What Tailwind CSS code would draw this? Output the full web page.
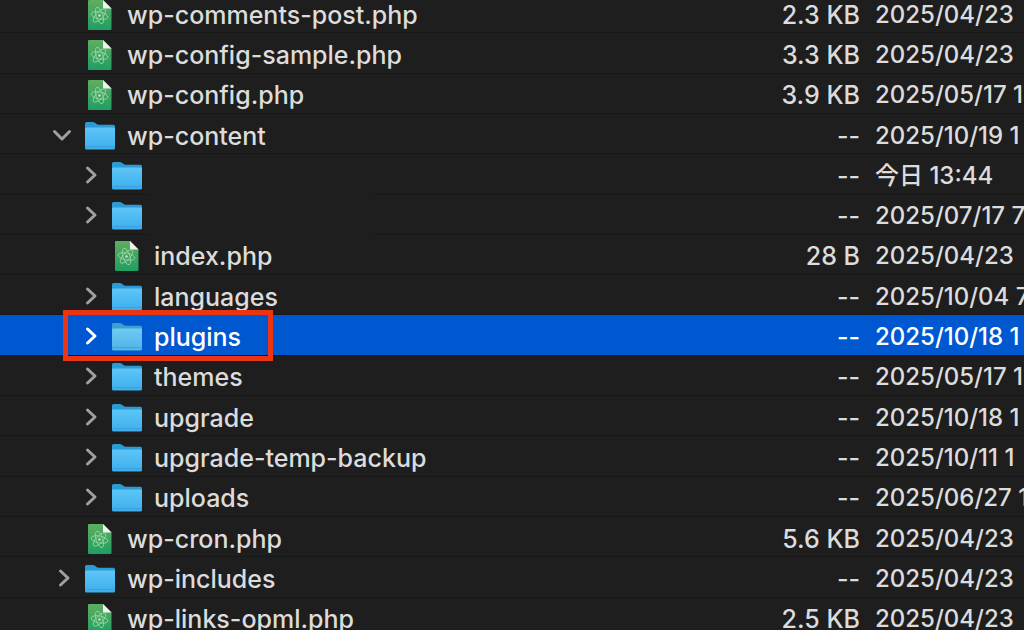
<!DOCTYPE html>
<html lang="ja">
<head>
    <meta charset="UTF-8">
    <meta name="viewport" content="width=device-width, initial-scale=1.0">
    <title>wp-content</title>
    <script src="https://cdn.jsdelivr.net/npm/@tailwindcss/browser@4"></script>
</head>
<body class="bg-[#1e1e1e] overflow-hidden font-['Inter','Noto_Sans_CJK_JP',sans-serif]">
    <!-- Icons -->
    <svg width="0" height="0" class="absolute" aria-hidden="true">
        <defs>
            <linearGradient id="folderFront" x1="0" y1="0" x2="0" y2="1">
                <stop offset="0" stop-color="#5ec5f7"/>
                <stop offset="0.75" stop-color="#45b4f0"/>
                <stop offset="1" stop-color="#3dabe8"/>
            </linearGradient>
            <linearGradient id="folderSelected" x1="0" y1="0" x2="0" y2="1">
                <stop offset="0" stop-color="#6fcbf3"/>
                <stop offset="1" stop-color="#4fb3e6"/>
            </linearGradient>
            <linearGradient id="fileBody" x1="0" y1="0" x2="0" y2="1">
                <stop offset="0" stop-color="#5fae60"/>
                <stop offset="1" stop-color="#1f9e63"/>
            </linearGradient>
        </defs>
        <symbol id="folder" viewBox="0 0 32 30">
            <path d="M1 2.500Q1 1 2.500 1H8.500Q10 1 11 1.800L12.500 3Q13.500 3.800 15 3.800H29.500Q31 3.800 31 5.500V12H1Z" fill="#2b9bd6"/>
            <path d="M1 7.500Q1 6.500 2.500 6.500H29.500Q31 6.500 31 7.500V27Q31 28.500 29.500 28.500H2.500Q1 28.500 1 27Z" fill="url(#folderFront)"/>
            <path d="M1 25.500H31" stroke="#36a0dc" stroke-width="0.800"/>
        </symbol>
        <symbol id="folder-selected" viewBox="0 0 32 30">
            <path d="M1 2.500Q1 1 2.500 1H8.500Q10 1 11 1.800L12.500 3Q13.500 3.800 15 3.800H29.500Q31 3.800 31 5.500V12H1Z" fill="#3d9fd0"/>
            <path d="M1 7.500Q1 6.500 2.500 6.500H29.500Q31 6.500 31 7.500V27Q31 28.500 29.500 28.500H2.500Q1 28.500 1 27Z" fill="url(#folderSelected)"/>
            <path d="M1 25.500H31" stroke="#3f9fd2" stroke-width="0.800"/>
        </symbol>
        <symbol id="file" viewBox="0 0 32 30">
            <path d="M4 1Q4 0 5 0H19L27.500 8.500V29Q27.500 30 26.500 30H5Q4 30 4 29Z" fill="url(#fileBody)"/>
            <path d="M19 0L27.500 8.500H20Q19 8.500 19 7.500Z" fill="#eef3ee"/>
            <g fill="none" stroke="#a2d6ab" stroke-width="0.800">
                <ellipse cx="15.500" cy="15.500" rx="8.500" ry="3.400" transform="rotate(12 15.500 15.500)"/>
                <ellipse cx="15.500" cy="15.500" rx="8.500" ry="3.400" transform="rotate(72 15.500 15.500)"/>
                <ellipse cx="15.500" cy="15.500" rx="8.500" ry="3.400" transform="rotate(132 15.500 15.500)"/>
            </g>
            <circle cx="15.500" cy="15.500" r="1.200" fill="#c5e8cc"/>
        </symbol>
        <symbol id="chevron-right" viewBox="0 0 24 24">
            <path d="M8.500 4L16 11L8.500 18" fill="none" stroke="currentColor" stroke-width="3" stroke-linecap="round" stroke-linejoin="round"/>
        </symbol>
        <symbol id="chevron-down" viewBox="0 0 24 24">
            <path d="M2.500 7.500L10 15L17.500 7.500" fill="none" stroke="currentColor" stroke-width="3" stroke-linecap="round" stroke-linejoin="round"/>
        </symbol>
    </svg>

    <!-- File list -->
    <table class="w-full h-[calc(100vh+15px)] -mt-[7px] table-fixed border-collapse text-[25px] leading-8 font-medium text-[#dcdcdc] whitespace-nowrap">
        <colgroup>
            <col>
            <col class="w-[140px]">
            <col class="w-[164px]">
        </colgroup>
        <tbody id="files"></tbody>
    </table>

    <script>
        // type: file / folder, open: expanded, level: depth in the tree
        const files = [
            { name: 'wp-comments-post.php', type: 'file', level: 1, size: '2.3 KB', date: '2025/04/23' },
            { name: 'wp-config-sample.php', type: 'file', level: 1, size: '3.3 KB', date: '2025/04/23' },
            { name: 'wp-config.php', type: 'file', level: 1, size: '3.9 KB', date: '2025/05/17 1' },
            { name: 'wp-content', type: 'folder', level: 1, size: '--', date: '2025/10/19 1', open: true },
            { name: '', type: 'folder', level: 2, size: '--', date: '今日 13:44' },
            { name: '', type: 'folder', level: 2, size: '--', date: '2025/07/17 7' },
            { name: 'index.php', type: 'file', level: 2, size: '28 B', date: '2025/04/23' },
            { name: 'languages', type: 'folder', level: 2, size: '--', date: '2025/10/04 7' },
            { name: 'plugins', type: 'folder', level: 2, size: '--', date: '2025/10/18 1', selected: true },
            { name: 'themes', type: 'folder', level: 2, size: '--', date: '2025/05/17 1' },
            { name: 'upgrade', type: 'folder', level: 2, size: '--', date: '2025/10/18 1' },
            { name: 'upgrade-temp-backup', type: 'folder', level: 2, size: '--', date: '2025/10/11 1' },
            { name: 'uploads', type: 'folder', level: 2, size: '--', date: '2025/06/27 1' },
            { name: 'wp-cron.php', type: 'file', level: 1, size: '5.6 KB', date: '2025/04/23' },
            { name: 'wp-includes', type: 'folder', level: 1, size: '--', date: '2025/04/23' },
            { name: 'wp-links-opml.php', type: 'file', level: 1, size: '2.5 KB', date: '2025/04/23' }
        ];

        function chevron(f) {
            if (f.type === 'file') return '<span class="w-6 shrink-0"></span>';
            const color = f.selected ? 'text-white' : 'text-[#a0a0a0]';
            const icon = f.open ? 'chevron-down' : 'chevron-right';
            return `<button type="button" aria-label="${f.name || 'folder'}" aria-expanded="${!!f.open}" class="w-6 h-6 shrink-0 ${color}"><svg class="w-6 h-6"><use href="#${icon}"/></svg></button>`;
        }

        function row(f) {
            const indent = f.level === 2 ? 'pl-[79px]' : 'pl-[52px]';
            const look = f.selected ? 'bg-[#0058d0] text-white' : '';
            const icon = f.selected ? 'folder-selected' : f.type;
            const frame = f.selected ? '<div class="absolute left-[63px] -top-[5px] -bottom-[6px] w-[210px] border-5 border-[#ea3412] z-10"></div>' : '';
            const blank = f.name ? '' : '<div class="absolute left-[150px] top-1 -bottom-px w-[222px] bg-[#1e1e1e]"></div>';
            return `
                <tr class="border-b border-[#181818] ${look}">
                    <td class="relative p-0 pt-1">
                        ${frame}${blank}
                        <div class="flex items-center ${indent}">
                            ${chevron(f)}
                            <svg class="w-8 h-[30px] ml-2 mr-[11px] shrink-0"><use href="#${icon}"/></svg>
                            <span>${f.name}</span>
                        </div>
                    </td>
                    <td class="p-0 pt-1 text-right">${f.size}</td>
                    <td class="p-0 pt-1 pl-[15px] text-2xl leading-8 overflow-hidden">${f.date}</td>
                </tr>`;
        }

        document.getElementById('files').innerHTML = files.map(row).join('');
    </script>
</body>
</html>
